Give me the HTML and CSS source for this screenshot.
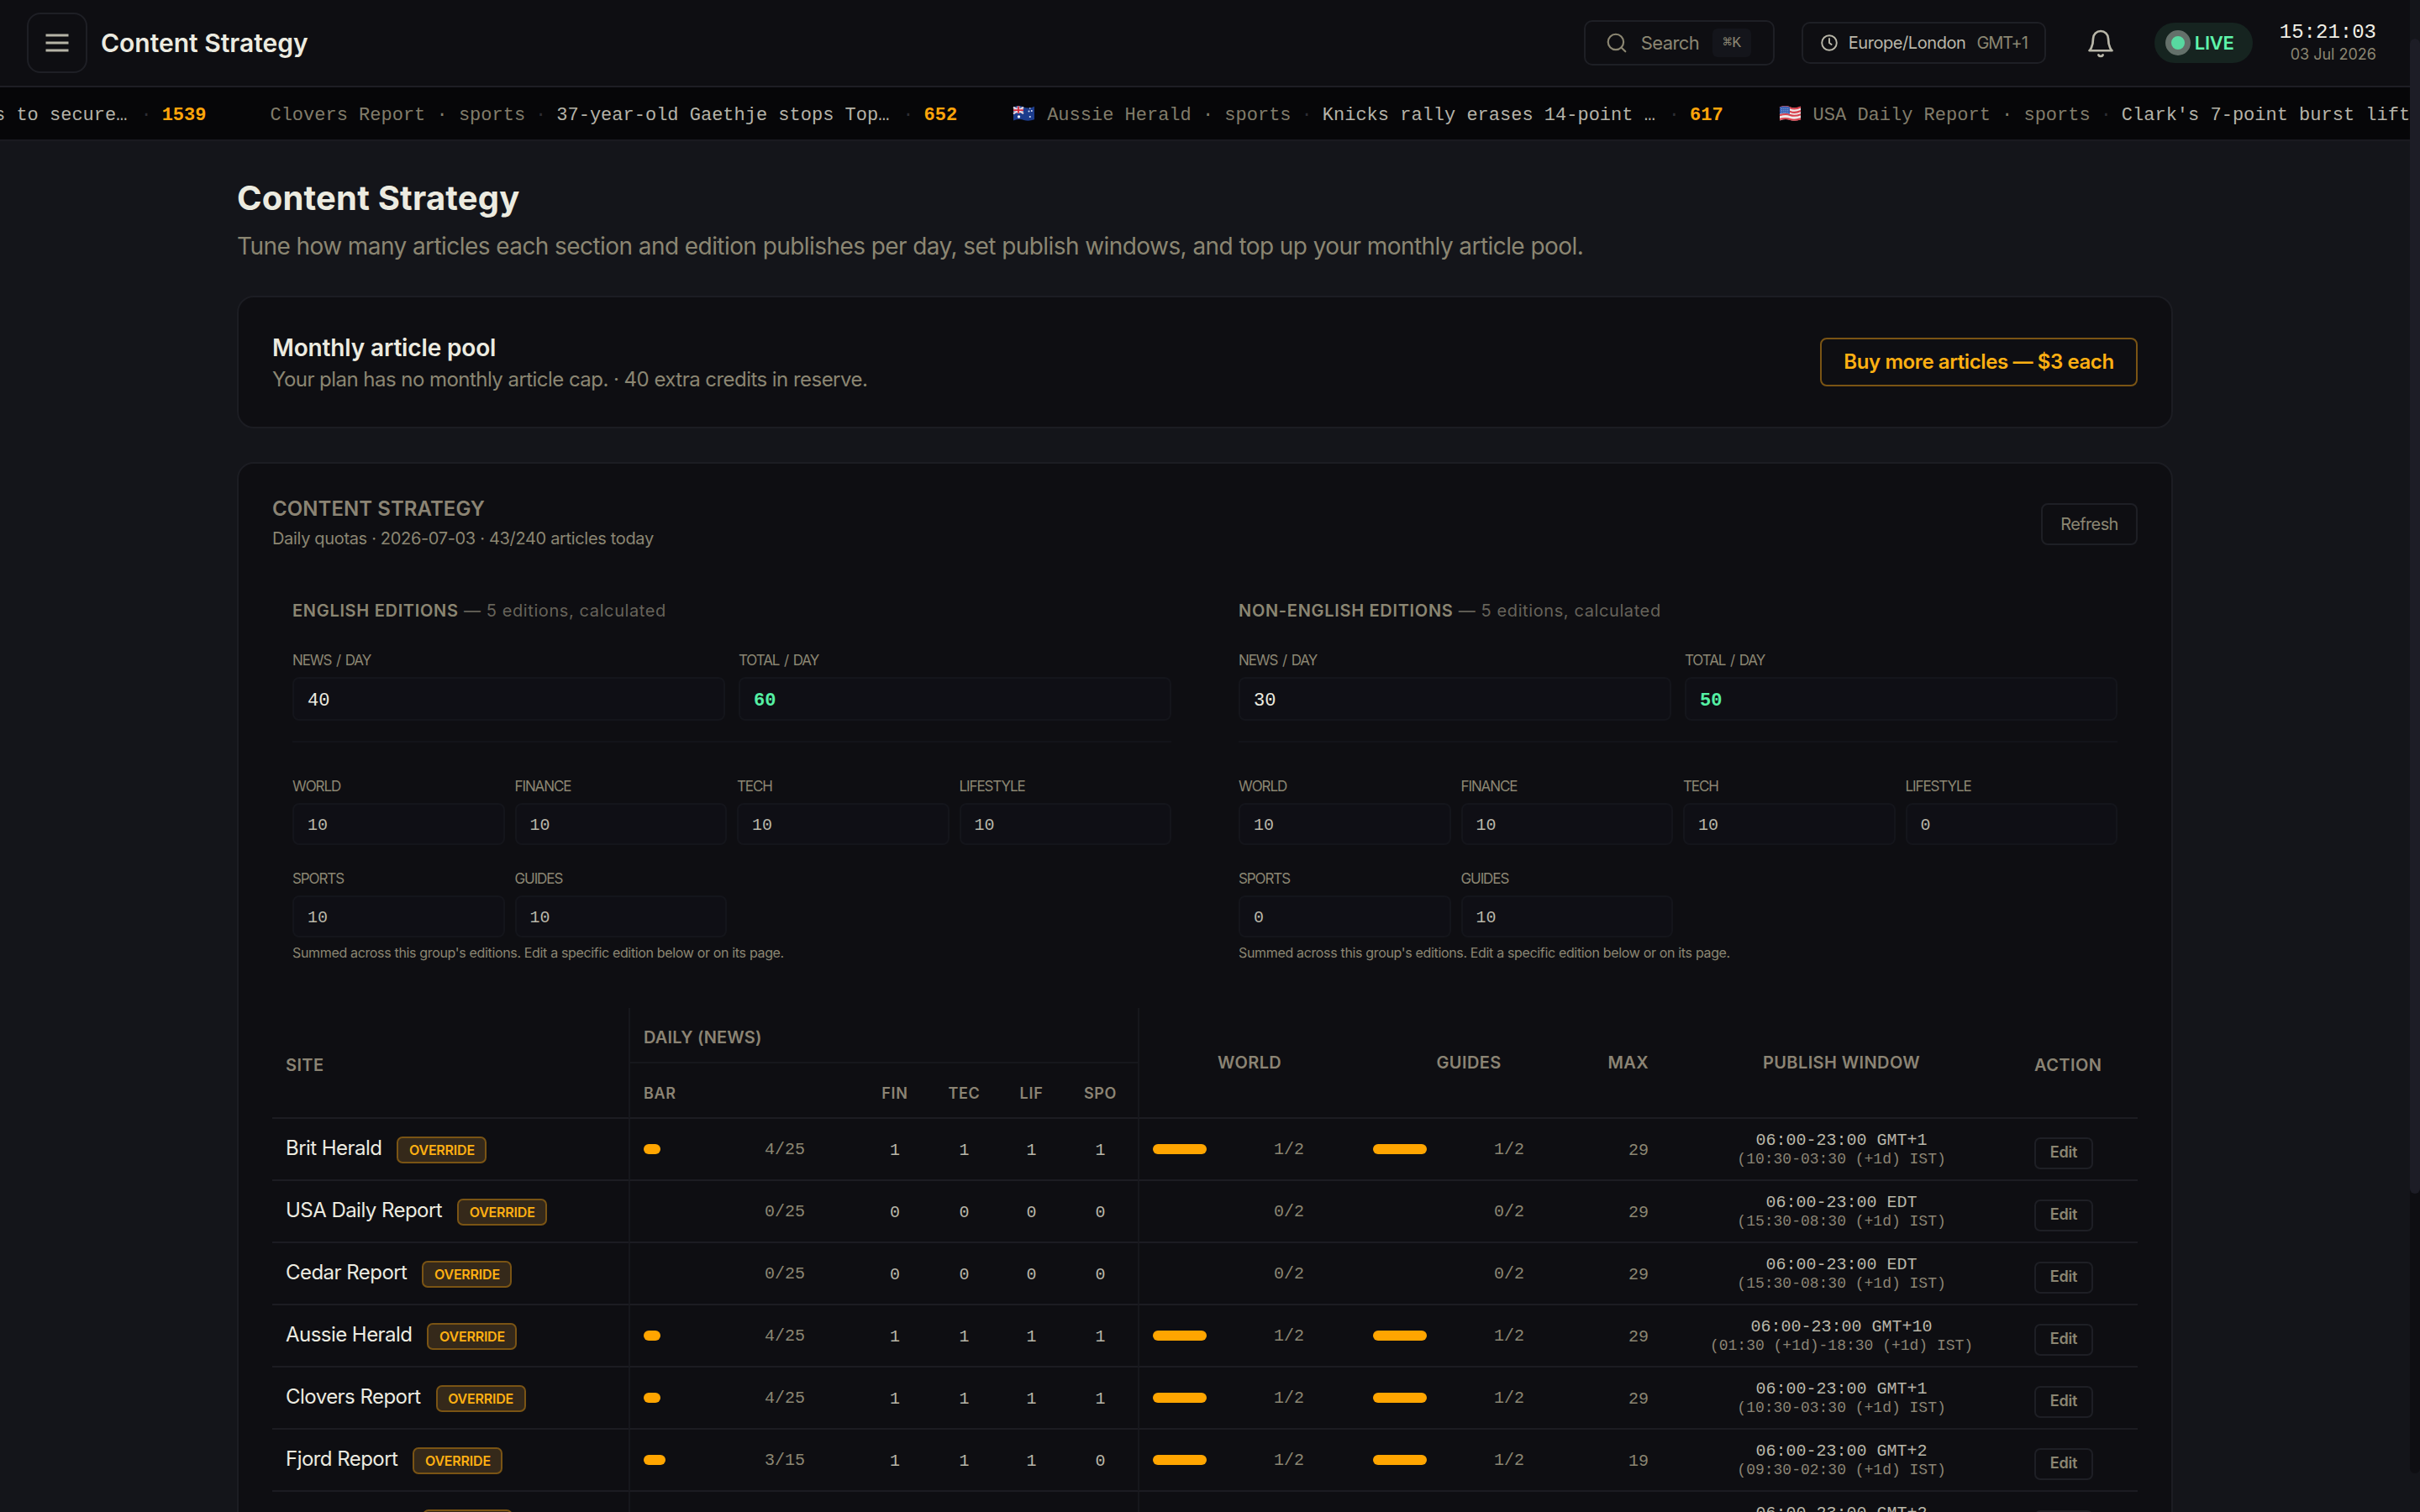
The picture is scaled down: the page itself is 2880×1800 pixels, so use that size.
FILE: index.html
```html
<!DOCTYPE html>
<html lang="en">
<head>
    <meta charset="UTF-8">
    <meta name="viewport" content="width=device-width, initial-scale=1.0">
    <title>Content Strategy</title>
    <link rel="stylesheet" href="styles.css">
</head>
<body>
    <div class="app">
        <header class="topbar">
            <button class="menu-btn">
                <svg width="36" height="36" viewBox="0 0 24 24" fill="none" stroke="currentColor" stroke-width="2"><path d="M3 6h18M3 12h18M3 18h18"/></svg>
            </button>
            <div class="topbar-title">Content Strategy</div>
            <button class="search">
                <svg width="26" height="26" viewBox="0 0 24 24" fill="none" stroke="currentColor" stroke-width="2" stroke-linecap="round"><circle cx="11" cy="11" r="8.5"/><path d="M21.5 21.5l-4.5-4.5"/></svg>
                <span>Search</span>
                <kbd>⌘K</kbd>
            </button>
            <div class="timezone">
                <svg width="20" height="20" viewBox="0 0 20 20" fill="none" stroke="currentColor" stroke-width="1.9" stroke-linecap="round"><circle cx="10" cy="10" r="8.8"/><path d="M10 5v5l2.6 2"/></svg>
                <span class="tz-name">Europe/London</span>
                <span class="tz-offset">GMT+1</span>
            </div>
            <button class="bell">
                <svg width="36" height="36" viewBox="0 0 24 24" fill="none" stroke="currentColor" stroke-width="1.8" stroke-linecap="round" stroke-linejoin="round"><path d="M18 8A6 6 0 0 0 6 8c0 7-3 9.5-3 9.5h18S18 15 18 8"/><path d="M13.73 21a2 2 0 0 1-3.46 0"/></svg>
            </button>
            <div class="live"><span class="live-dot"></span>LIVE</div>
            <div class="clock">
                <div class="clock-time">15:21:03</div>
                <div class="clock-date">03 Jul 2026</div>
            </div>
        </header>

        <div class="ticker">
            <div class="tick tick-first">
                <span class="tick-title">s to secure…</span>
                <span class="tick-sep">·</span>
                <span class="tick-score">1539</span>
            </div>
            <div class="tick">
                <span class="tick-flag"></span>
                <span class="tick-site">Clovers Report · sports</span>
                <span class="tick-sep">·</span>
                <span class="tick-title">37-year-old Gaethje stops Top…</span>
                <span class="tick-sep">·</span>
                <span class="tick-score">652</span>
            </div>
            <div class="tick">
                <span class="tick-flag">
                    <svg width="31" height="20" viewBox="0 0 31 20">
                        <path d="M3 2.5q7-2.5 12.5 0t12.5-.8v15.6q-7 2.5-12.5.6t-12.5.6z" fill="#1c3c8c"/>
                        <path d="M3 2.5q6-2.2 12 0v8q-6-2-12 0z" fill="#3a5aa5"/>
                        <path d="M3 2.7l12 7.4M15 2.7L3 10.3" stroke="#e8d5da" stroke-width="2"/>
                        <path d="M9 1.4v8.4M3 6.1h12" stroke="#f0e4e6" stroke-width="3"/>
                        <path d="M9 1.4v8.4M3 6.1h12" stroke="#d3283c" stroke-width="1.8"/>
                        <circle cx="9.5" cy="14" r="1.7" fill="#eef1fa"/>
                        <circle cx="21.5" cy="7.5" r="1" fill="#dfe6f8"/>
                        <circle cx="24.8" cy="7" r="1" fill="#dfe6f8"/>
                        <circle cx="22.8" cy="4" r=".8" fill="#dfe6f8"/>
                        <circle cx="22.8" cy="14" r="1.1" fill="#dfe6f8"/>
                    </svg>
                </span>
                <span class="tick-site">Aussie Herald · sports</span>
                <span class="tick-sep">·</span>
                <span class="tick-title">Knicks rally erases 14-point …</span>
                <span class="tick-sep">·</span>
                <span class="tick-score">617</span>
            </div>
            <div class="tick">
                <span class="tick-flag">
                    <svg width="31" height="20" viewBox="0 0 31 20">
                        <path d="M3 2.5q7-2.5 12.5 0t12.5-.8v15.6q-7 2.5-12.5.6t-12.5.6z" fill="#eee6e6"/>
                        <path d="M3 3.3q7-2.5 12.5 0t12.5-.8M3 7.8q7-2.5 12.5 0t12.5-.8M3 12.3q7-2.2 12.5-.3t12.5-.8M3 17q7-1.8 12.5 0t12.5-.8" stroke="#d8404c" stroke-width="2" fill="none"/>
                        <path d="M3 2.5q6-2.2 12 0v8.2q-6-2-12 0z" fill="#3a62b4"/>
                        <path d="M5 4.4h9M5 6.6h9M5 8.6h9" stroke="#a9bbe4" stroke-width=".8" stroke-dasharray="1 1.4"/>
                    </svg>
                </span>
                <span class="tick-site">USA Daily Report · sports</span>
                <span class="tick-sep">·</span>
                <span class="tick-title">Clark's 7-point burst lift</span>
            </div>
        </div>

        <main class="content">
            <h1>Content Strategy</h1>
            <p class="lead">Tune how many articles each section and edition publishes per day, set publish windows, and top up your monthly article pool.</p>

            <section class="card pool">
                <div>
                    <h2>Monthly article pool</h2>
                    <p>Your plan has no monthly article cap. · 40 extra credits in reserve.</p>
                </div>
                <button class="buy-btn">Buy more articles — $3 each</button>
            </section>

            <section class="card">
                <div class="strategy-head">
                    <div>
                        <h2>CONTENT STRATEGY</h2>
                        <p>Daily quotas · 2026-07-03 · 43/240 articles today</p>
                    </div>
                    <button class="refresh-btn">Refresh</button>
                </div>

                <div class="editions">
                    <div class="edition">
                        <h3><b>ENGLISH EDITIONS</b> — 5 editions, calculated</h3>
                        <div class="totals">
                            <div class="field"><label>NEWS / DAY</label><input type="text" value="40" readonly></div>
                            <div class="field"><label>TOTAL / DAY</label><input class="total" type="text" value="60" readonly></div>
                        </div>
                        <div class="sections">
                            <div class="field"><label>WORLD</label><input type="text" value="10" readonly></div>
                            <div class="field"><label>FINANCE</label><input type="text" value="10" readonly></div>
                            <div class="field"><label>TECH</label><input type="text" value="10" readonly></div>
                            <div class="field"><label>LIFESTYLE</label><input type="text" value="10" readonly></div>
                            <div class="field"><label>SPORTS</label><input type="text" value="10" readonly></div>
                            <div class="field"><label>GUIDES</label><input type="text" value="10" readonly></div>
                        </div>
                        <p class="hint">Summed across this group's editions. Edit a specific edition below or on its page.</p>
                    </div>
                    <div class="edition">
                        <h3><b>NON-ENGLISH EDITIONS</b> — 5 editions, calculated</h3>
                        <div class="totals">
                            <div class="field"><label>NEWS / DAY</label><input type="text" value="30" readonly></div>
                            <div class="field"><label>TOTAL / DAY</label><input class="total" type="text" value="50" readonly></div>
                        </div>
                        <div class="sections">
                            <div class="field"><label>WORLD</label><input type="text" value="10" readonly></div>
                            <div class="field"><label>FINANCE</label><input type="text" value="10" readonly></div>
                            <div class="field"><label>TECH</label><input type="text" value="10" readonly></div>
                            <div class="field"><label>LIFESTYLE</label><input type="text" value="0" readonly></div>
                            <div class="field"><label>SPORTS</label><input type="text" value="0" readonly></div>
                            <div class="field"><label>GUIDES</label><input type="text" value="10" readonly></div>
                        </div>
                        <p class="hint">Summed across this group's editions. Edit a specific edition below or on its page.</p>
                    </div>
                </div>

                <table class="quotas">
                    <colgroup>
                        <col class="c-site"><col class="c-bar"><col class="c-fin"><col class="c-tec"><col class="c-lif"><col class="c-spo"><col class="c-world"><col class="c-guides"><col class="c-max"><col class="c-window"><col class="c-action">
                    </colgroup>
                    <thead>
                        <tr>
                            <th rowspan="2" class="left low">SITE</th>
                            <th colspan="5" class="left group">DAILY (NEWS)</th>
                            <th rowspan="2" class="split">WORLD</th>
                            <th rowspan="2">GUIDES</th>
                            <th rowspan="2" class="right">MAX</th>
                            <th rowspan="2">PUBLISH WINDOW</th>
                            <th rowspan="2" class="left low">ACTION</th>
                        </tr>
                        <tr class="sub">
                            <th class="left split">BAR</th>
                            <th>FIN</th>
                            <th>TEC</th>
                            <th>LIF</th>
                            <th>SPO</th>
                        </tr>
                    </thead>
                    <tbody>
                        <tr>
                            <td><div class="site"><span>Brit Herald</span><span class="badge">OVERRIDE</span></div></td>
                            <td class="split"><div class="meter"><div class="track"><i style="width: 16%"></i></div><span>4/25</span></div></td>
                            <td class="num">1</td><td class="num">1</td><td class="num">1</td><td class="num">1</td>
                            <td class="split"><div class="meter"><div class="track"><i style="width: 50%"></i></div><span>1/2</span></div></td>
                            <td><div class="meter"><div class="track"><i style="width: 50%"></i></div><span>1/2</span></div></td>
                            <td class="max">29</td>
                            <td class="window"><div>06:00-23:00 GMT+1</div><small>(10:30-03:30 (+1d) IST)</small></td>
                            <td><button class="edit-btn">Edit</button></td>
                        </tr>
                        <tr>
                            <td><div class="site"><span>USA Daily Report</span><span class="badge">OVERRIDE</span></div></td>
                            <td class="split"><div class="meter"><div class="track"></div><span>0/25</span></div></td>
                            <td class="num">0</td><td class="num">0</td><td class="num">0</td><td class="num">0</td>
                            <td class="split"><div class="meter"><div class="track"></div><span>0/2</span></div></td>
                            <td><div class="meter"><div class="track"></div><span>0/2</span></div></td>
                            <td class="max">29</td>
                            <td class="window"><div>06:00-23:00 EDT</div><small>(15:30-08:30 (+1d) IST)</small></td>
                            <td><button class="edit-btn">Edit</button></td>
                        </tr>
                        <tr>
                            <td><div class="site"><span>Cedar Report</span><span class="badge">OVERRIDE</span></div></td>
                            <td class="split"><div class="meter"><div class="track"></div><span>0/25</span></div></td>
                            <td class="num">0</td><td class="num">0</td><td class="num">0</td><td class="num">0</td>
                            <td class="split"><div class="meter"><div class="track"></div><span>0/2</span></div></td>
                            <td><div class="meter"><div class="track"></div><span>0/2</span></div></td>
                            <td class="max">29</td>
                            <td class="window"><div>06:00-23:00 EDT</div><small>(15:30-08:30 (+1d) IST)</small></td>
                            <td><button class="edit-btn">Edit</button></td>
                        </tr>
                        <tr>
                            <td><div class="site"><span>Aussie Herald</span><span class="badge">OVERRIDE</span></div></td>
                            <td class="split"><div class="meter"><div class="track"><i style="width: 16%"></i></div><span>4/25</span></div></td>
                            <td class="num">1</td><td class="num">1</td><td class="num">1</td><td class="num">1</td>
                            <td class="split"><div class="meter"><div class="track"><i style="width: 50%"></i></div><span>1/2</span></div></td>
                            <td><div class="meter"><div class="track"><i style="width: 50%"></i></div><span>1/2</span></div></td>
                            <td class="max">29</td>
                            <td class="window"><div>06:00-23:00 GMT+10</div><small>(01:30 (+1d)-18:30 (+1d) IST)</small></td>
                            <td><button class="edit-btn">Edit</button></td>
                        </tr>
                        <tr>
                            <td><div class="site"><span>Clovers Report</span><span class="badge">OVERRIDE</span></div></td>
                            <td class="split"><div class="meter"><div class="track"><i style="width: 16%"></i></div><span>4/25</span></div></td>
                            <td class="num">1</td><td class="num">1</td><td class="num">1</td><td class="num">1</td>
                            <td class="split"><div class="meter"><div class="track"><i style="width: 50%"></i></div><span>1/2</span></div></td>
                            <td><div class="meter"><div class="track"><i style="width: 50%"></i></div><span>1/2</span></div></td>
                            <td class="max">29</td>
                            <td class="window"><div>06:00-23:00 GMT+1</div><small>(10:30-03:30 (+1d) IST)</small></td>
                            <td><button class="edit-btn">Edit</button></td>
                        </tr>
                        <tr>
                            <td><div class="site"><span>Fjord Report</span><span class="badge">OVERRIDE</span></div></td>
                            <td class="split"><div class="meter"><div class="track"><i style="width: 20%"></i></div><span>3/15</span></div></td>
                            <td class="num">1</td><td class="num">1</td><td class="num">1</td><td class="num">0</td>
                            <td class="split"><div class="meter"><div class="track"><i style="width: 50%"></i></div><span>1/2</span></div></td>
                            <td><div class="meter"><div class="track"><i style="width: 50%"></i></div><span>1/2</span></div></td>
                            <td class="max">19</td>
                            <td class="window"><div>06:00-23:00 GMT+2</div><small>(09:30-02:30 (+1d) IST)</small></td>
                            <td><button class="edit-btn">Edit</button></td>
                        </tr>
                        <tr>
                            <td><div class="site"><span class="site-blank"></span><span class="badge">OVERRIDE</span></div></td>
                            <td class="split"></td>
                            <td></td><td></td><td></td><td></td>
                            <td class="split"></td>
                            <td></td>
                            <td></td>
                            <td class="window"><div>06:00-23:00 GMT+2</div></td>
                            <td><button class="edit-btn">Edit</button></td>
                        </tr>
                    </tbody>
                </table>
            </section>
        </main>
    </div>
    <div class="scrollbar"><div class="scroll-track"><div class="scroll-thumb"></div></div></div>
</body>
</html>
```
FILE: styles.css
```css
* {
    box-sizing: border-box;
    margin: 0;
    padding: 0;
}
body {
    display: flex;
    width: 2880px;
    height: 1800px;
    overflow: hidden;
    background: #14151a;
    color: #ecebe0;
    font-family: Inter, "Liberation Sans", sans-serif;
}
button, input {
    font-family: inherit;
    background: none;
    border: none;
    color: inherit;
}
svg {
    display: block;
    flex: none;
}
.app {
    width: 2868px;
    height: 1800px;
    overflow: hidden;
}

/* top bar */
.topbar {
    display: flex;
    align-items: center;
    height: 104px;
    padding: 0 40px 0 32px;
    background: #0e0e12;
    border-bottom: 2px solid #1e1e24;
}
.menu-btn {
    width: 72px;
    height: 72px;
    display: flex;
    align-items: center;
    justify-content: center;
    border: 2px solid #1e1f25;
    border-radius: 16px;
    color: #b5b3a6;
}
.topbar-title {
    margin-left: 16px;
    margin-right: auto;
    font-size: 30px;
    line-height: 40px;
    font-weight: 600;
    padding-bottom: 1px;
}
.search {
    display: flex;
    align-items: center;
    gap: 16px;
    width: 227px;
    height: 54px;
    padding-left: 24px;
    border: 2px solid #1e1f25;
    border-radius: 10px;
    color: #8b8672;
    font-size: 22px;
    letter-spacing: -0.6px;
}
.search kbd {
    width: 46px;
    height: 34px;
    line-height: 34px;
    text-align: center;
    border-radius: 6px;
    background: #14151b;
    font-family: "Liberation Mono", "DejaVu Sans Mono", monospace;
    font-size: 18px;
    letter-spacing: 0;
}
.timezone {
    display: flex;
    align-items: center;
    width: 291px;
    height: 50px;
    margin-left: 32px;
    padding-left: 21px;
    border: 2px solid #1e1f25;
    border-radius: 10px;
    color: #b9b7a9;
    font-size: 20px;
}
.tz-name {
    margin-left: 13px;
    letter-spacing: -0.44px;
}
.tz-offset {
    margin-left: 13px;
    color: #8b8672;
    letter-spacing: -1.1px;
}
.bell {
    display: flex;
    justify-content: center;
    width: 65px;
    margin: 1px 31px 0 33px;
    color: #b9b7a9;
}
.live {
    display: flex;
    align-items: center;
    width: 117px;
    height: 48px;
    padding-left: 13px;
    border-radius: 24px;
    background: #162420;
    color: #5ff5ab;
    font-size: 22px;
    font-weight: 600;
    letter-spacing: -0.3px;
}
.live-dot {
    width: 30px;
    height: 30px;
    margin-right: 5px;
    border: 7px solid #64706a;
    border-radius: 50%;
    background: #58d9a0;
}
.clock {
    margin-left: 32px;
    padding-bottom: 3px;
    text-align: right;
}
.clock-time {
    font-family: "Liberation Mono", monospace;
    font-size: 24px;
    line-height: 30px;
    color: #f0efe6;
}
.clock-date {
    font-size: 18px;
    line-height: 22px;
    color: #8b8672;
}

/* headline ticker */
.ticker {
    display: flex;
    align-items: center;
    gap: 64px;
    height: 64px;
    padding-top: 4px;
    background: #060608;
    border-bottom: 2px solid #1a1a20;
    font-family: "Liberation Mono", monospace;
    font-size: 22px;
    white-space: nowrap;
    overflow: hidden;
}
.tick {
    display: flex;
    align-items: center;
    gap: 12px;
    flex: none;
}
.tick-first {
    margin-left: -7px;
}
.tick-first .tick-title {
    width: auto;
    margin-right: 4px;
}
.tick-site {
    color: #817c6a;
}
.tick-sep {
    color: #2d2d33;
}
.tick-title {
    width: 400px;
    color: #b5b3a8;
}
.tick-score {
    color: #ffa50a;
    font-weight: 700;
}
.tick-flag {
    padding-bottom: 4px;
}

/* page */
.content {
    width: 2304px;
    margin: 0 auto;
    padding-top: 44px;
}
h1 {
    font-size: 40px;
    line-height: 48px;
    font-weight: 700;
    letter-spacing: 0.2px;
}
.lead {
    margin-top: 12px;
    margin-bottom: 40px;
    font-size: 28px;
    line-height: 42px;
    height: 40px;
    letter-spacing: -0.57px;
    color: #8b8672;
}
.card {
    padding: 40px;
    border: 2px solid #1c1d23;
    border-radius: 20px;
    background: #0e0e12;
    margin-bottom: 40px;
}
.pool {
    display: flex;
    justify-content: space-between;
    align-items: center;
    height: 158px;
}
.pool h2 {
    font-size: 28px;
    line-height: 40px;
    font-weight: 600;
    letter-spacing: -0.15px;
}
.pool p {
    font-size: 24px;
    line-height: 36px;
    height: 34px;
    letter-spacing: -0.54px;
    color: #8b8672;
}
.buy-btn {
    width: 378px;
    height: 58px;
    padding-bottom: 2px;
    border: 2px solid #7a5414;
    border-radius: 8px;
    color: #ffb012;
    font-size: 24px;
    font-weight: 600;
    letter-spacing: -0.4px;
}
.strategy-head {
    display: flex;
    justify-content: space-between;
    height: 64px;
}
.strategy-head h2 {
    font-size: 24px;
    line-height: 28px;
    font-weight: 600;
    letter-spacing: 0.05px;
    color: #8b8474;
}
.strategy-head p {
    margin-top: 7px;
    font-size: 20px;
    line-height: 28px;
    letter-spacing: -0.33px;
    color: #8b8672;
}
.refresh-btn {
    align-self: center;
    width: 115px;
    height: 50px;
    border: 2px solid #1e1f25;
    border-radius: 8px;
    color: #8b8672;
    font-size: 20px;
    letter-spacing: -0.6px;
}

/* edition groups */
.editions {
    display: grid;
    grid-template-columns: 1fr 1fr;
    gap: 32px;
    margin-top: 57px;
}
.edition {
    padding: 0 24px;
}
.edition h3 {
    font-size: 20px;
    line-height: 28px;
    font-weight: 400;
    letter-spacing: 0.6px;
    color: #66635a;
}
.edition h3 b {
    font-weight: 600;
    letter-spacing: 0.7px;
    color: #8b8672;
}
.totals {
    display: grid;
    grid-template-columns: 1fr 1fr;
    gap: 16px;
    margin-top: 34px;
    padding-bottom: 24px;
    border-bottom: 2px solid #131419;
}
.field label {
    display: block;
    font-size: 17px;
    line-height: 22px;
    letter-spacing: -1.1px;
    word-spacing: 2px;
    color: #8b8672;
}
.field input {
    display: block;
    width: 100%;
    height: 50px;
    margin-top: 9px;
    padding: 3px 16px 0;
    border: 2px solid #14151b;
    border-radius: 8px;
    background: #0f0f15;
    color: #b9b7a9;
    font-family: "Liberation Mono", monospace;
    font-size: 20px;
}
.totals input {
    height: 52px;
    padding-top: 4px;
    font-size: 22px;
    color: #ecebe0;
}
.totals .total {
    color: #55f0a4;
    font-weight: 700;
}
.sections {
    display: grid;
    grid-template-columns: repeat(4, 1fr);
    gap: 29px 12px;
    margin-top: 41px;
}
.hint {
    margin-top: 7px;
    font-size: 16px;
    line-height: 22px;
    letter-spacing: -0.34px;
    color: #8b8672;
}

/* quota table */
.quotas {
    width: 2220px;
    margin-top: 55px;
    table-layout: fixed;
    border-collapse: separate;
    border-spacing: 0;
}
.c-site { width: 424px; }
.c-bar { width: 277px; }
.c-fin { width: 80px; }
.c-tec { width: 85px; }
.c-lif { width: 75px; }
.c-spo { width: 89px; }
.c-world { width: 264px; }
.c-guides { width: 260px; }
.c-max { width: 100px; }
.c-window { width: 427px; }
.c-action { width: 139px; }
.quotas th {
    height: 66px;
    border-bottom: 2px solid #1c1c22;
    font-size: 20px;
    line-height: 24px;
    font-weight: 600;
    letter-spacing: 0.4px;
    color: #8b8474;
}
.quotas .sub th {
    padding-top: 7px;
    font-size: 18px;
    letter-spacing: 0.7px;
}
.quotas th.left {
    padding-left: 16px;
    text-align: left;
}
.quotas th.right {
    padding-right: 16px;
    text-align: right;
}
.quotas th.low {
    padding-top: 5px;
}
.quotas th.group {
    padding-top: 6px;
    border-left: 2px solid #16171c;
    border-bottom-color: #16171c;
    letter-spacing: 0.15px;
}
.quotas .split {
    border-left: 2px solid #16171c;
}
.quotas td {
    height: 74px;
    padding: 0 16px;
    border-bottom: 2px solid #1c1c22;
}
.site {
    display: flex;
    align-items: center;
    gap: 18px;
    font-size: 24px;
    letter-spacing: -0.54px;
    white-space: nowrap;
}
.site span:first-child {
    padding-bottom: 4px;
}
.site-blank {
    width: 145px;
}
.badge {
    width: 107px;
    height: 32px;
    margin-top: 1px;
    border: 2px solid #7a5414;
    border-radius: 7px;
    background: #35291a;
    color: #ffb012;
    font-size: 16px;
    line-height: 28px;
    font-weight: 600;
    letter-spacing: -0.2px;
    text-align: center;
}
.meter {
    display: flex;
    align-items: center;
    gap: 16px;
    font-family: "Liberation Mono", monospace;
    font-size: 20px;
    line-height: 24px;
    color: #8b8672;
}
.meter span {
    padding-top: 2px;
}
.track {
    width: 128px;
    height: 12px;
}
.track i {
    display: block;
    height: 12px;
    border-radius: 6px;
    background: #ffa500;
}
.quotas .num, .quotas .max {
    padding-top: 2px;
    font-family: "Liberation Mono", monospace;
    font-size: 20px;
    text-align: center;
    color: #b9b7a9;
}
.quotas .max {
    text-align: right;
    color: #8b8672;
}
.quotas .window {
    padding-top: 2px;
    font-family: "Liberation Mono", monospace;
    font-size: 20px;
    line-height: 22px;
    text-align: center;
    color: #b9b7a9;
}
.window small {
    display: block;
    font-size: 18px;
    color: #8b8474;
}
/* keeps the first line in place when there is no second one */
.window div:last-child {
    padding-bottom: 22px;
}
.edit-btn {
    display: block;
    width: 70px;
    height: 38px;
    margin-top: 10px;
    padding-bottom: 3px;
    border: 2px solid #1e1f25;
    border-radius: 7px;
    color: #8b8672;
    font-size: 18px;
    font-weight: 600;
    letter-spacing: -0.2px;
}

/* scrollbar */
.scrollbar {
    width: 12px;
    height: 1800px;
    background: #14151a;
    padding-top: 46px;
}
.scroll-track {
    height: 1708px;
    border-radius: 6px;
    background: #0e0e12;
}
.scroll-thumb {
    height: 1375px;
    border-radius: 6px;
    background: #1d1d26;
}
```
